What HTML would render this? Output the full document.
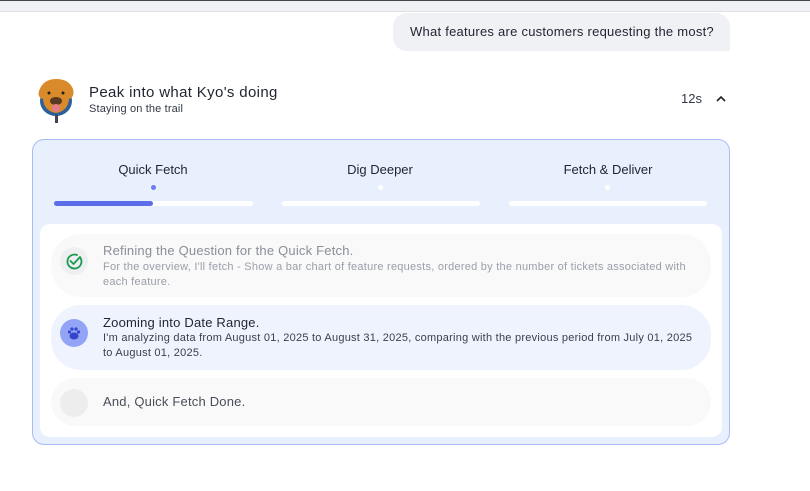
<!DOCTYPE html>
<html><head><style>
*{margin:0;padding:0;box-sizing:border-box}
body{width:810px;height:491px;background:#fff;font-family:"Liberation Sans",sans-serif;position:relative;overflow:hidden;color:#1f2430}
.a{position:absolute}
.item{position:absolute;left:51px;width:660px;border-radius:30px}
.ic{position:absolute;left:9px;width:28px;height:28px;border-radius:50%}
.t{position:absolute;left:52px;font-size:13px;letter-spacing:0.2px}
.d{position:absolute;left:52px;font-size:11px;line-height:15px;color:#555a66;width:594px;letter-spacing:0.25px}
.bar{position:absolute;top:201px;height:5px;border-radius:3px;background:#fff}
.lab{position:absolute;top:162px;font-size:13px;color:#1f2430;width:200px;text-align:center}
.dot{position:absolute;top:185px;width:5px;height:5px;border-radius:50%;background:#fff}
</style></head><body>
<div class="a" style="left:0;top:0;width:810px;height:12px;background:#f0f1f4;border-top:1px solid #444;border-bottom:1px solid #dfe0e4"></div>
<div class="a" style="left:393px;top:13px;width:337px;height:38px;background:#f0f1f5;border-radius:14px 14px 0 14px;font-size:13px;line-height:38px;padding-left:17px;color:#1f2430;letter-spacing:0.25px">What features are customers requesting the most?</div>
<svg class="a" style="left:35px;top:77px" width="44" height="48" viewBox="0 0 44 48">
<ellipse cx="21" cy="24" rx="16" ry="15" fill="#2d5f9a"/>
<path d="M4 14 Q8 2 21 2 Q34 2 38 12 Q40 20 34 22 Q33 34 21 36 Q9 34 8 22 Q2 20 4 14Z" fill="#d98a2a"/>
<ellipse cx="21" cy="24" rx="6" ry="4" fill="#5a3a20"/>
<ellipse cx="21" cy="31" rx="4" ry="4" fill="#e27b8b"/>
<circle cx="14" cy="16" r="1.5" fill="#222"/><circle cx="28" cy="16" r="1.5" fill="#222"/>
<rect x="20" y="38" width="3" height="8" fill="#445"/>
</svg>
<div class="a" style="left:89px;top:84px;font-size:15px;color:#1f2430;letter-spacing:0.35px">Peak into what Kyo's doing</div>
<div class="a" style="left:89px;top:103px;font-size:11px;color:#333845;letter-spacing:0.15px">Staying on the trail</div>
<div class="a" style="left:681px;top:91px;font-size:13px;color:#333845">12s</div>
<svg class="a" style="left:715px;top:94px" width="12" height="10"><path d="M2 7 L6 3 L10 7" fill="none" stroke="#222" stroke-width="1.6"/></svg>
<div class="a" style="left:32px;top:139px;width:698px;height:306px;background:#e8effd;border:1px solid #a9bbf5;border-radius:12px"></div>
<div class="lab" style="left:53px">Quick Fetch</div>
<div class="lab" style="left:280px">Dig Deeper</div>
<div class="lab" style="left:508px">Fetch &amp; Deliver</div>
<div class="dot" style="left:151px;background:#6a7cf0"></div>
<div class="dot" style="left:378px"></div>
<div class="dot" style="left:605px"></div>
<div class="bar" style="left:54px;width:199px"></div>
<div class="bar" style="left:54px;width:99px;background:#5b6de9"></div>
<div class="bar" style="left:282px;width:198px"></div>
<div class="bar" style="left:509px;width:198px"></div>
<div class="a" style="left:40px;top:224px;width:682px;height:213px;background:#fff;border-radius:10px"></div>
<div class="item" style="top:234px;height:63px;background:#f9f9fa">
 <div class="ic" style="top:13px;background:#eeeff1"><svg width="28" height="28"><path d="M20.5 11 A7 7 0 1 1 17 8" fill="none" stroke="#1a9a50" stroke-width="1.8" stroke-linecap="round"/><path d="M10.5 14 L13.5 17 L20 10" fill="none" stroke="#1a9a50" stroke-width="1.8" stroke-linecap="round"/></svg></div>
 <div class="t" style="top:9px;color:#8a8e98">Refining the Question for the Quick Fetch.</div>
 <div class="d" style="top:26px;color:#9a9ea8">For the overview, I'll fetch - Show a bar chart of feature requests, ordered by the number of tickets associated with each feature.</div>
</div>
<div class="item" style="top:305px;height:65px;background:#eef3fd">
 <div class="ic" style="top:14px;background:#93a4f7"><svg width="28" height="28" fill="#3346c8"><ellipse cx="14" cy="17" rx="4.5" ry="3.5"/><circle cx="9.5" cy="13" r="1.6"/><circle cx="12" cy="10" r="1.6"/><circle cx="16" cy="10" r="1.6"/><circle cx="18.5" cy="13" r="1.6"/></svg></div>
 <div class="t" style="top:10px;color:#1f2430">Zooming into Date Range.</div>
 <div class="d" style="top:26px;color:#3a3f4b">I'm analyzing data from August 01, 2025 to August 31, 2025, comparing with the previous period from July 01, 2025 to August 01, 2025.</div>
</div>
<div class="item" style="top:378px;height:48px;background:#f9f9fa">
 <div class="ic" style="top:11px;background:#ededee"></div>
 <div class="t" style="top:16px;color:#4a4e58">And, Quick Fetch Done.</div>
</div>
</body></html>
